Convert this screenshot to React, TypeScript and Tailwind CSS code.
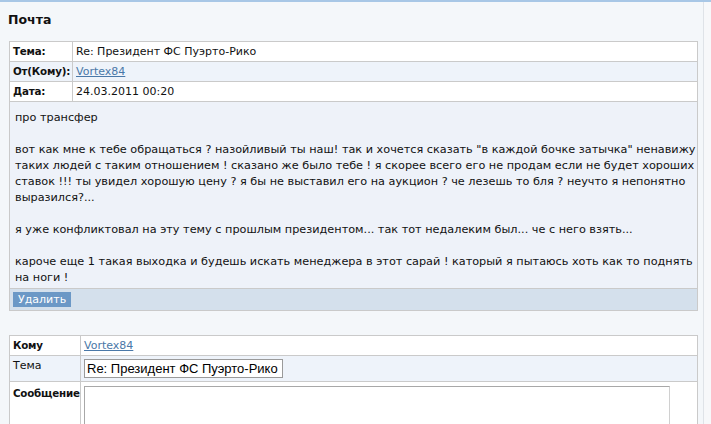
const bodyLines = [
  "про трансфер",
  "",
  "вот как мне к тебе обращаться ? назойливый ты наш! так и хочется сказать \"в каждой бочке затычка\" ненавижу",
  "таких людей с таким отношением ! сказано же было тебе ! я скорее всего его не продам если не будет хороших",
  "ставок !!! ты увидел хорошую цену ? я бы не выставил его на аукцион ? че лезешь то бля ? неучто я непонятно",
  "выразился?...",
  "",
  "я уже конфликтовал на эту тему с прошлым президентом... так тот недалеким был... че с него взять...",
  "",
  "кароче еще 1 такая выходка и будешь искать менеджера в этот сарай ! каторый я пытаюсь хоть как то поднять",
  "на ноги !",
];

const label = "border-r border-[#cacaca] pl-[3px] font-bold text-[10.3px] tracking-[-0.2px] whitespace-nowrap";

const App = () => {
  return (
    <div className="w-[711px] h-[424px] overflow-hidden bg-[#f4f7fa] font-['DejaVu_Sans',sans-serif] text-[11px] text-[#111]">
      <div className="h-[2px] bg-[#a8c7e6]" />
      <div className="flex">
        <div className="w-[704px] border-r border-[#dfe3e8] h-[422px]">
          <h2 className="h-[39px] pl-[8px] pt-[10px] text-[12.5px] font-bold leading-[16px]">Почта</h2>

          {/* letter */}
          <div className="ml-[9px] w-[689px] border border-[#cacaca]">
            <div className="grid grid-cols-[63px_1fr] h-[20px] bg-white border-b border-[#cacaca] leading-[19px]">
              <span className={label}>Тема:</span>
              <span className="pl-[3px]">Re: Президент ФС Пуэрто-Рико</span>
            </div>
            <div className="grid grid-cols-[63px_1fr] h-[20px] bg-[#eef3fa] border-b border-[#cacaca] leading-[19px]">
              <span className={label}>От(Кому):</span>
              <span className="pl-[3px]">
                <a href="#" className="text-[#4a78a8] underline">Vortex84</a>
              </span>
            </div>
            <div className="grid grid-cols-[63px_1fr] h-[20px] bg-white border-b border-[#cacaca] leading-[19px]">
              <span className={label}>Дата:</span>
              <span className="pl-[3px]">24.03.2011 00:20</span>
            </div>
            <div className="bg-[#eef2f9] pl-[5px] pt-[8px] pb-[2px] leading-[16px] text-[11.25px] border-b border-[#cacaca]">
              {bodyLines.map((line, i) => (
                <div key={i} className="h-[16px] whitespace-nowrap">{line}</div>
              ))}
            </div>
            <div className="h-[21px] bg-[#d4e0ec] pl-[3px] pt-[3px]">
              <button className="h-[15px] w-[58px] bg-[#6b98c6] text-white text-[11px] leading-[15px] pl-[5px] text-left">
                Удалить
              </button>
            </div>
          </div>

          {/* reply */}
          <div className="ml-[9px] mt-[24px] w-[689px] border border-[#cacaca] border-b-0">
            <div className="grid grid-cols-[71px_1fr] h-[20px] bg-white border-b border-[#cacaca] leading-[19px]">
              <span className={label}>Кому</span>
              <span className="pl-[3px]">
                <a href="#" className="text-[#4a78a8] underline">Vortex84</a>
              </span>
            </div>
            <div className="grid grid-cols-[71px_1fr] h-[26px] bg-[#eef3fa] border-b border-[#cacaca]">
              <span className="border-r border-[#cacaca] pl-[3px] pt-[2px] leading-[16px]">Тема</span>
              <div className="pl-[3px] pt-[3px]">
                <input
                  defaultValue="Re: Президент ФС Пуэрто-Рико"
                  className="w-[199px] h-[19px] border border-[#9a9a9a] bg-white px-[2px] font-['Liberation_Sans',sans-serif] text-[13px] text-black outline-none"
                />
              </div>
            </div>
            <div className="grid grid-cols-[71px_1fr] h-[60px] bg-white">
              <span className={`${label} pt-[3px] leading-[16px]`}>Сообщение</span>
              <div className="pl-[3px] pt-[4px]">
                <textarea className="w-[586px] h-[60px] border border-[#a8a8a8] border-r-[#d0d0d0] bg-white resize-none outline-none" />
              </div>
            </div>
          </div>
        </div>
        <div className="flex-1 bg-[#f7f8fa]" />
      </div>
    </div>
  );
};

export default App;
